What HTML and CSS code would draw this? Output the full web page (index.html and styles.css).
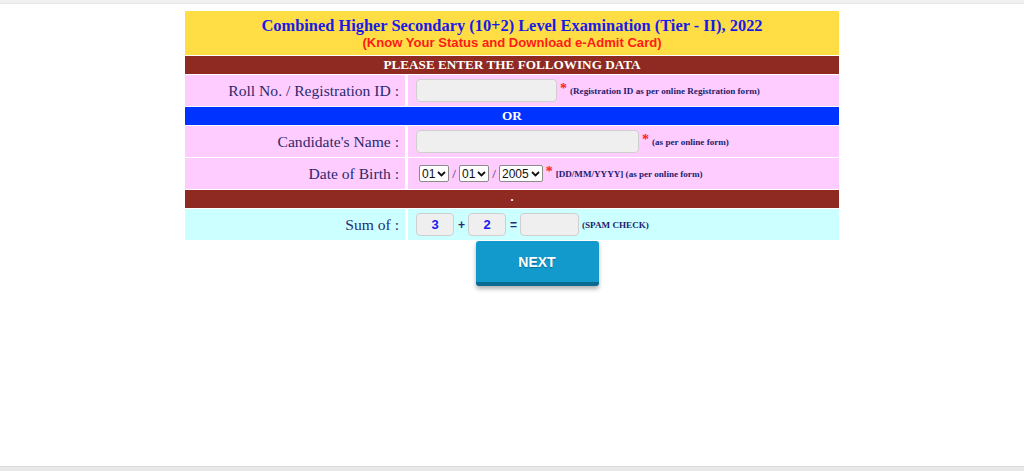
FILE: index.html
```html
<!DOCTYPE html>
<html>
<head>
<meta charset="utf-8">
<link rel="stylesheet" href="styles.css">
</head>
<body>
<div class="topline"></div>
<div class="page">
  <div class="form">
    <div class="head">
      <div class="title">Combined Higher Secondary (10+2) Level Examination (Tier - II), 2022</div>
      <div class="subtitle">(Know Your Status and Download e-Admit Card)</div>
    </div>
    <div class="bar brown">PLEASE ENTER THE FOLLOWING DATA</div>
    <div class="row pink">
      <div class="label">Roll No. / Registration ID :</div>
      <div class="field"><span class="input roll"></span><span class="star">*</span><span class="note">(Registration ID as per online Registration form)</span></div>
    </div>
    <div class="bar blue">OR</div>
    <div class="row pink">
      <div class="label">Candidate's Name :</div>
      <div class="field"><span class="input name"></span><span class="star">*</span><span class="note">(as per online form)</span></div>
    </div>
    <div class="row pink">
      <div class="label">Date of Birth :</div>
      <div class="field dob">
        <span class="sel">01<svg width="9" height="6" viewBox="0 0 9 6"><path d="M1 1l3.5 3.5L8 1" fill="none" stroke="#111" stroke-width="1.8"/></svg></span>
        <span class="slash">/</span>
        <span class="sel">01<svg width="9" height="6" viewBox="0 0 9 6"><path d="M1 1l3.5 3.5L8 1" fill="none" stroke="#111" stroke-width="1.8"/></svg></span>
        <span class="slash">/</span>
        <span class="sel">2005<svg width="9" height="6" viewBox="0 0 9 6"><path d="M1 1l3.5 3.5L8 1" fill="none" stroke="#111" stroke-width="1.8"/></svg></span>
        <span class="star">*</span><span class="note">[DD/MM/YYYY] (as per online form)</span>
      </div>
    </div>
    <div class="bar brown dot">.</div>
    <div class="row cyan">
      <div class="label">Sum of :</div>
      <div class="field">
        <span class="input num">3</span><span class="op">+</span><span class="input num">2</span><span class="op">=</span><span class="input ans"></span><span class="note">(SPAM CHECK)</span>
      </div>
    </div>
  </div>
  <div class="btnwrap"><button class="next">NEXT</button></div>
</div>
<div class="bottomline"></div>
</body>
</html>
```
FILE: styles.css
```css
html, body {
  margin: 0;
  padding: 0;
  background: #fff;
  height: 471px;
  overflow: hidden;
}
body {
  font-family: "Liberation Serif", "Times New Roman", serif;
  position: relative;
}
.topline {
  height: 3px;
  background: #f0f0f0;
  border-bottom: 1px solid #e6e6e6;
}
.page {
  display: flex;
  flex-direction: column;
  align-items: center;
  padding-top: 7px;
}
.form {
  width: 654px;
  display: flex;
  flex-direction: column;
  gap: 1px;
  background: #fff;
}
.head {
  background: #ffdd44;
  height: 44px;
  display: flex;
  flex-direction: column;
  align-items: center;
  padding-top: 5px;
  box-sizing: border-box;
}
.title {
  color: #1a1ae6;
  font-weight: bold;
  font-size: 16.4px;
  line-height: 19px;
}
.subtitle {
  color: #ff1a1a;
  font-family: "Liberation Sans", Arial, sans-serif;
  font-weight: bold;
  font-size: 13.1px;
  line-height: 15px;
}
.bar {
  color: #fff;
  font-weight: bold;
  font-size: 13.2px;
  height: 18px;
  line-height: 18px;
  text-align: center;
}
.brown { background: #8e2a22; }
.blue { background: #0033ff; }
.dot { line-height: 14px; font-size: 12px; }
.row {
  display: grid;
  grid-template-columns: 220px 1fr;
  column-gap: 3px;
  background: #fff;
  height: 31px;
}
.row > div { display: flex; align-items: center; }
.pink > div { background: #ffccff; }
.cyan > div { background: #ccffff; }
.label {
  justify-content: flex-end;
  padding-right: 6px;
  font-size: 15.6px;
  color: #2a2a6e;
}
.field {
  padding-left: 8px;
}
.field.dob { padding-left: 11px; }
.input {
  display: inline-block;
  box-sizing: border-box;
  height: 23px;
  background: #efefef;
  border: 1px solid #cfcfcf;
  border-radius: 4px;
  font-family: "Liberation Sans", Arial, sans-serif;
}
.roll { width: 141px; }
.name { width: 223px; }
.num {
  width: 38px;
  color: #1a1aee;
  font-weight: bold;
  font-size: 13px;
  text-align: center;
  line-height: 21px;
}
.ans { width: 59px; }
.star {
  color: #ff2222;
  font-weight: bold;
  font-size: 14px;
  margin-left: 3px;
  margin-right: 1px;
  position: relative;
  top: -2px;
}
.note {
  color: #1d1d6e;
  font-weight: bold;
  font-size: 9.1px;
  margin-left: 2px;
}
.sel {
  display: inline-flex;
  align-items: center;
  gap: 2px;
  box-sizing: border-box;
  height: 17px;
  padding: 0 2px 0 2px;
  background: #fff;
  border: 1px solid #8a8a8a;
  border-radius: 2px;
  font-family: "Liberation Sans", Arial, sans-serif;
  font-size: 12px;
  color: #111;
}
.slash {
  color: #2a2a6e;
  font-size: 13px;
  margin: 0 3px;
}
.op {
  color: #2a2a6e;
  font-weight: bold;
  font-family: "Liberation Sans", Arial, sans-serif;
  font-size: 12px;
  margin: 0 3px 0 4px;
}
.ans + .note { margin-left: 3px; }
.btnwrap {
  display: flex;
  justify-content: center;
  padding-top: 1px;
  padding-left: 50px;
}
.next {
  width: 123px;
  height: 45px;
  background: #129acd;
  color: #fff;
  border: none;
  border-radius: 3px;
  border-bottom: 4px solid #0a6a8f;
  box-shadow: 0 3px 4px rgba(0,0,0,0.3);
  font-family: "Liberation Sans", Arial, sans-serif;
  font-weight: bold;
  font-size: 14px;
  text-shadow: 0 1px 1px rgba(0,0,0,0.3);
  padding: 0;
}
.bottomline {
  position: absolute;
  left: 0;
  right: 0;
  bottom: 0;
  height: 4px;
  background: #e8e8e8;
  border-top: 1px solid #dcdcdc;
}
```
